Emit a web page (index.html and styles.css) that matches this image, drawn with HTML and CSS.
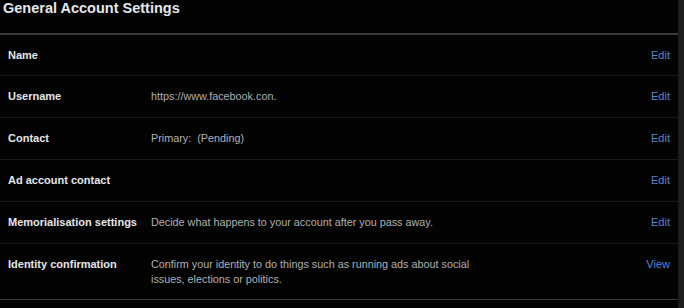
FILE: index.html
```html
<!DOCTYPE html>
<html lang="en">
<head>
<meta charset="utf-8">
<title>General Account Settings</title>
<link rel="stylesheet" href="styles.css">
</head>
<body>
<div class="page">
  <main class="panel">
    <h1 class="title">General Account Settings</h1>
    <div class="rows">
      <div class="row row-first">
        <div class="label">Name</div>
        <div class="value"></div>
        <a class="action" href="#">Edit</a>
      </div>
      <div class="row">
        <div class="label">Username</div>
        <div class="value">https://www.facebook.con.</div>
        <a class="action" href="#">Edit</a>
      </div>
      <div class="row">
        <div class="label">Contact</div>
        <div class="value">Primary:&nbsp; (Pending)</div>
        <a class="action" href="#">Edit</a>
      </div>
      <div class="row">
        <div class="label">Ad account contact</div>
        <div class="value"></div>
        <a class="action" href="#">Edit</a>
      </div>
      <div class="row">
        <div class="label">Memorialisation settings</div>
        <div class="value">Decide what happens to your account after you pass away.</div>
        <a class="action" href="#">Edit</a>
      </div>
      <div class="row row-last">
        <div class="label">Identity confirmation</div>
        <div class="value">Confirm your identity to do things such as running ads about social issues, elections or politics.</div>
        <a class="action" href="#">View</a>
      </div>
    </div>
  </main>
  <div class="scrollbar"></div>
</div>
</body>
</html>
```
FILE: styles.css
```css
html, body {
  margin: 0;
  padding: 0;
  background: #030303;
  height: 100%;
}

body {
  font-family: "Liberation Sans", Arial, sans-serif;
  color: #e4e6eb;
}

.page {
  display: flex;
  height: 308px;
  overflow: hidden;
}

.panel {
  flex: 1;
  display: flex;
  flex-direction: column;
}

.scrollbar {
  width: 6px;
  background: #1c1c1d;
}

.title {
  margin: 0;
  padding: 0 0 0 3px;
  height: 33px;
  font-size: 14.5px;
  line-height: 17px;
  font-weight: bold;
  color: #e4e6eb;
  border-bottom: 2px solid #38393b;
}

.rows {
  display: flex;
  flex-direction: column;
}

.row {
  display: grid;
  grid-template-columns: 143px 330px 1fr auto;
  align-items: start;
  padding: 13px 8px 13px 8px;
  border-bottom: 1px solid #18191a;
  font-size: 11px;
  line-height: 15px;
}

.row-first {
  padding-bottom: 12px;
}

.row-last {
  padding-bottom: 12px;
  border-bottom: 1px solid #3a3b3d;
}

.label {
  font-weight: bold;
  color: #e4e6eb;
  white-space: nowrap;
}

.value {
  color: #adb0b5;
  grid-column: 2;
  font-size: 10.8px;
}

.action {
  grid-column: 4;
  color: #5686d3;
  text-decoration: none;
  text-align: right;
}
```
